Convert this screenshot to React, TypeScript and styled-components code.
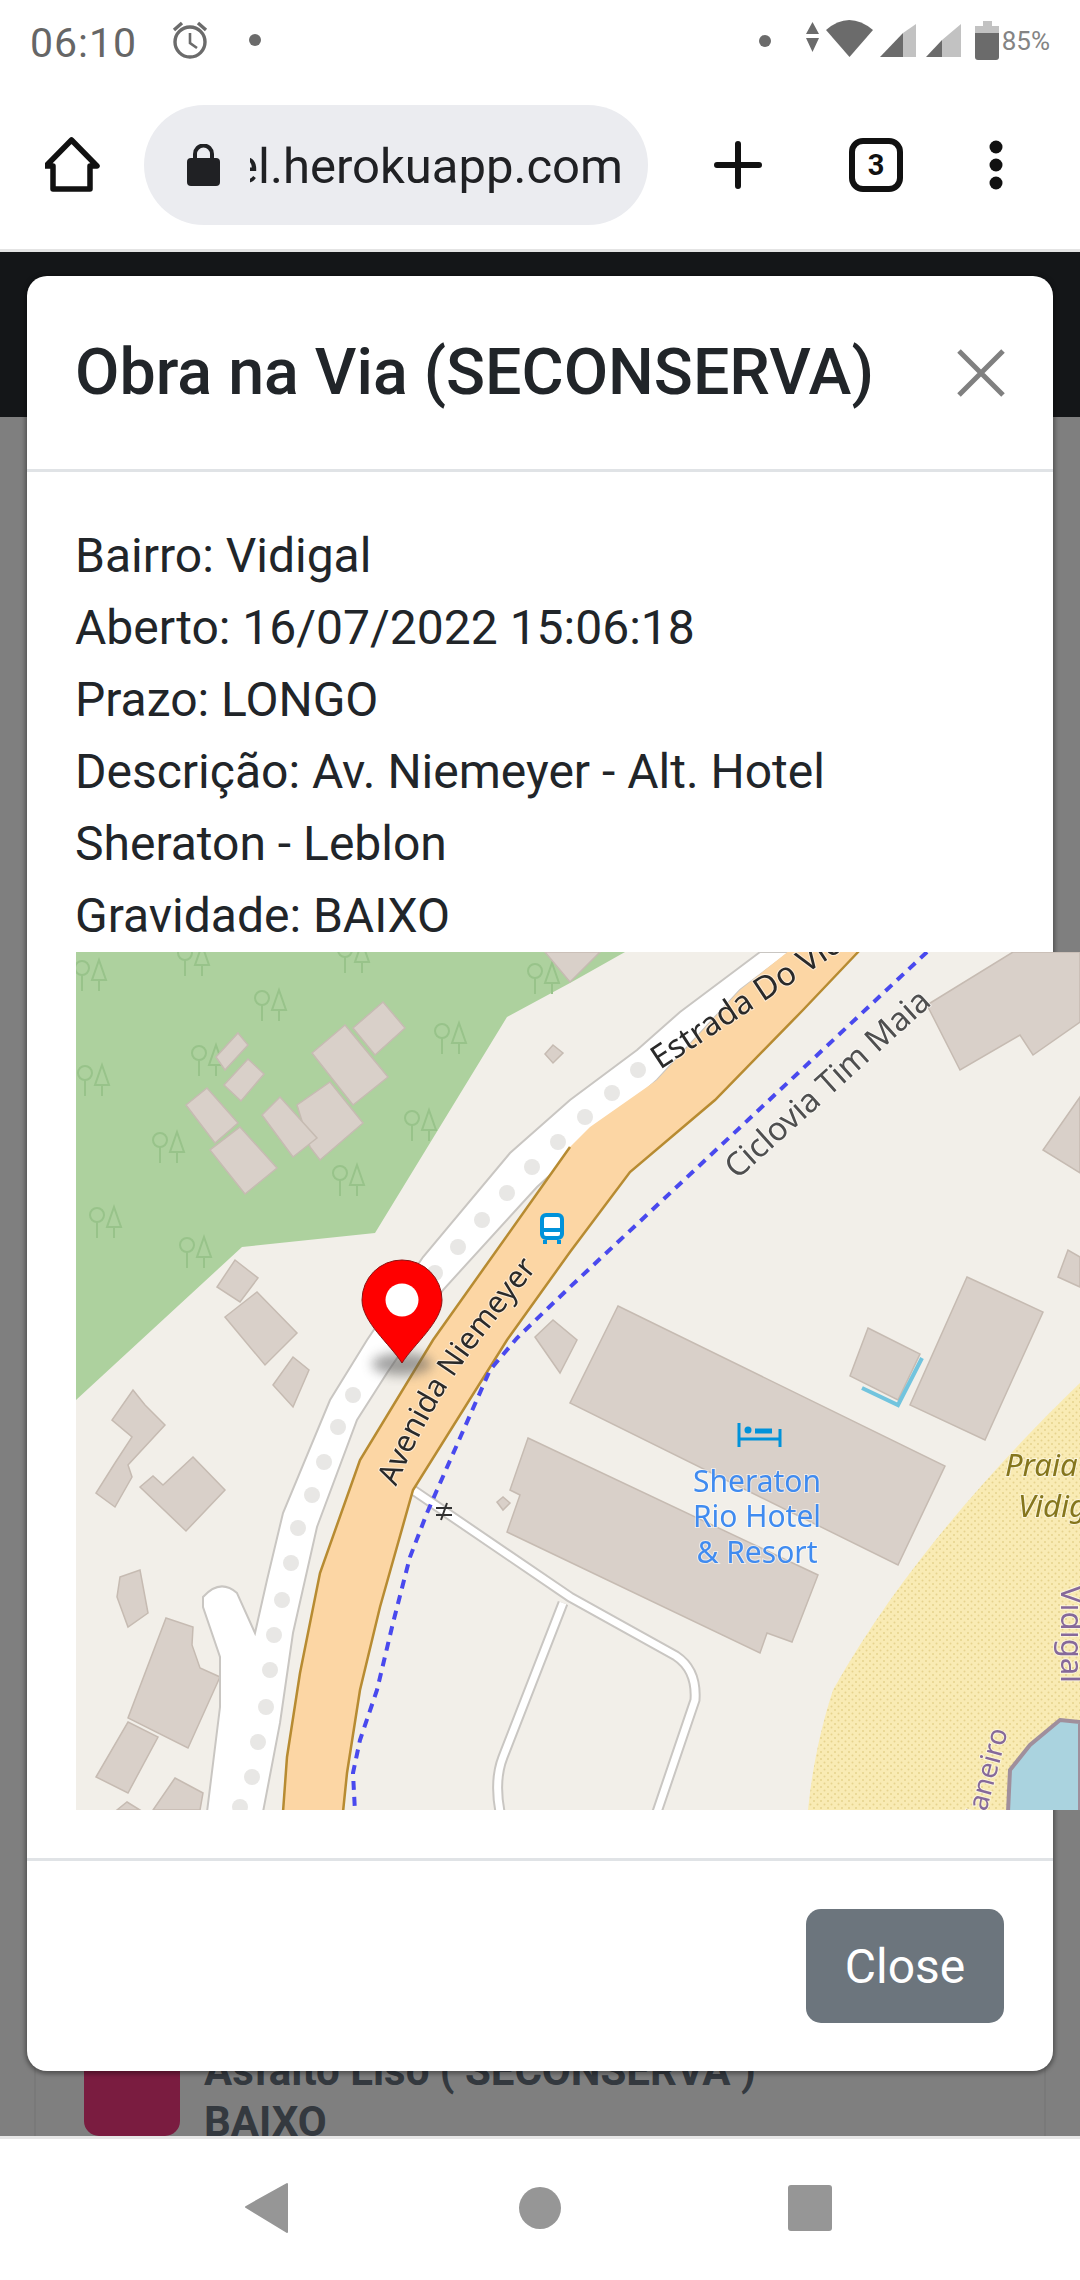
import React from "react";
import styled, { createGlobalStyle } from "styled-components";

const GlobalStyle = createGlobalStyle`
  html, body {
    margin: 0;
    padding: 0;
    background: #fff;
    font-family: Roboto, "Liberation Sans", sans-serif;
  }
`;

const Screen = styled.div`
  width: 1080px;
  height: 2280px;
  display: flex;
  flex-direction: column;
  overflow: hidden;
  background: #fff;
`;

const StatusBar = styled.div`
  height: 96px;
  flex: none;
  display: flex;
  align-items: center;
  justify-content: space-between;
  padding: 0 30px 14px;
  box-sizing: border-box;
  color: #666;
`;

const StatusGroup = styled.div`
  display: flex;
  align-items: center;
`;

const Time = styled.span`
  font-size: 41px;
  letter-spacing: 1px;
  margin: 3px 34px 0 0;
`;

const Percent = styled.span`
  font-size: 26px;
  color: #848484;
  margin-left: 3px;
`;

const Toolbar = styled.div`
  height: 156px;
  flex: none;
  display: flex;
  align-items: center;
  box-sizing: border-box;
  padding: 0 0 16px 45px;
  border-bottom: 3px solid #e4e4e4;
`;

const IconSlot = styled.svg<{ $gap: number }>`
  flex: none;
  margin-left: ${(p) => p.$gap}px;
`;

const AddressPill = styled.div`
  width: 504px;
  height: 120px;
  margin-left: 44px;
  flex: none;
  display: flex;
  align-items: center;
  gap: 30px;
  box-sizing: border-box;
  padding: 0 25px 0 43px;
  border-radius: 60px;
  background: #ebecf0;
`;

const Url = styled.div`
  flex: 1;
  min-width: 0;
  display: flex;
  justify-content: flex-end;
  overflow: hidden;
  white-space: nowrap;
  font-size: 49px;
  margin-top: 3px;
  color: #202124;
`;

const Viewport = styled.div`
  flex: 1;
  min-height: 0;
  position: relative;
  overflow: hidden;
  display: flex;
  flex-direction: column;
  justify-content: space-between;
`;

const SiteNav = styled.div`
  height: 165px;
  background: #282c30;
`;

const ListCard = styled.div`
  display: flex;
  gap: 24px;
  height: 110px;
  margin: 0 34px;
  padding: 0 48px;
  border: solid rgba(0, 0, 0, 0.05);
  border-width: 0 2px;
  align-items: flex-end;
`;

const Swatch = styled.div`
  width: 96px;
  height: 110px;
  flex: none;
  border-radius: 15px;
  background: #f43880;
`;

const ListText = styled.div`
  font-size: 42px;
  font-weight: 700;
  line-height: 51px;
  color: #68737f;
  margin-bottom: -11px;
  white-space: nowrap;
`;

const Backdrop = styled.div`
  position: absolute;
  inset: 0;
  background: rgba(0, 0, 0, 0.5);
  padding: 24px 27px 0;
`;

const Modal = styled.div`
  width: 1026px;
  height: 1795px;
  box-sizing: border-box;
  display: flex;
  flex-direction: column;
  background: #fff;
  border-radius: 20px;
  box-shadow: 0 1px 4px 2px rgba(0, 0, 0, 0.35);
`;

const ModalHeader = styled.div`
  height: 196px;
  flex: none;
  box-sizing: border-box;
  display: flex;
  align-items: flex-start;
  justify-content: space-between;
  padding: 51px 47px 0 48px;
  border-bottom: 3px solid #e0e3e6;
`;

const ModalTitle = styled.h5`
  margin: 0;
  font-size: 64.5px;
  font-weight: 500;
  line-height: 90px;
  color: #212529;
  white-space: nowrap;
`;

const ModalBody = styled.div`
  flex: none;
  padding: 48px 0 48px 49px;
  font-size: 48px;
  line-height: 72px;
  color: #212529;
`;

const BodyText = styled.div`
  width: 860px;
  margin-left: -1px;
`;

const MapSvg = styled.svg`
  display: block;
  width: 1004px;
  height: 858px;
`;

const ModalFooter = styled.div`
  flex: 1;
  display: flex;
  justify-content: flex-end;
  align-items: flex-start;
  padding: 48px 49px 0 0;
  border-top: 3px solid #e0e3e6;
`;

const CloseButton = styled.button`
  width: 198px;
  height: 114px;
  border: 0;
  border-radius: 15px;
  background: #6c757d;
  color: #fff;
  font-family: inherit;
  font-size: 48px;
`;

const NavBar = styled.div`
  height: 144px;
  flex: none;
  box-sizing: border-box;
  border-top: 3px solid #e6e6e6;
`;

const NavIcons = styled.svg`
  display: block;
`;

const buildings = [
  "383,1002 405,1028 375,1055 353,1028",
  "345,1025 388,1077 353,1105 312,1053",
  "330,1082 363,1123 320,1160 310,1147 297,1105",
  "280,1097 317,1138 293,1157 262,1115",
  "207,1088 238,1123 215,1143 186,1105",
  "240,1127 277,1168 245,1194 210,1150",
  "238,1033 248,1045 225,1070 216,1057",
  "248,1059 264,1074 241,1101 224,1085",
  "553,1045 563,1053 553,1063 545,1054",
  "545,952 570,982 600,952",
  "235,1260 258,1278 240,1302 217,1287",
  "257,1292 297,1333 265,1365 225,1317",
  "293,1357 309,1370 293,1407 273,1385",
  "133,1390 145,1405 165,1425 128,1465 132,1477 115,1507 96,1493 115,1463 132,1437 112,1420",
  "193,1457 225,1490 186,1531 140,1487 153,1476 163,1485",
  "120,1577 140,1570 148,1613 128,1627 117,1597",
  "166,1618 193,1627 192,1645 200,1668 220,1677 188,1748 128,1718",
  "128,1722 158,1737 128,1793 96,1777",
  "175,1778 203,1793 200,1810 153,1810",
  "127,1802 140,1810 117,1810",
  "528,1438 818,1575 792,1642 767,1633 760,1653 507,1532 520,1495 510,1490",
  "618,1306 945,1466 898,1565 570,1403",
  "868,1328 920,1354 898,1400 850,1376",
  "967,1277 1043,1312 985,1440 910,1405",
  "927,1005 1013,952 1080,952 1080,1022 1033,1055 1020,1035 960,1070",
  "1080,1097 1043,1150 1080,1173",
  "1068,1250 1058,1277 1080,1287 1080,1257",
  "535,1337 553,1320 577,1340 560,1373",
  "497,1502 503,1497 510,1503 503,1510",
];

const pathDots = [
  [638, 1070], [612, 1093], [585, 1117], [558, 1142], [532, 1167], [507, 1193],
  [482, 1220], [458, 1247], [435, 1273], [353, 1395], [338, 1427], [324, 1462],
  [312, 1495], [298, 1528], [291, 1563], [282, 1600], [274, 1635], [270, 1670],
  [266, 1707], [258, 1742], [252, 1777], [240, 1807],
];

const trees = [
  [75, 975], [178, 960], [338, 957], [255, 1005], [192, 1060], [78, 1080], [435, 1038],
  [405, 1125], [153, 1147], [333, 1180], [90, 1222], [180, 1252], [528, 978],
];

const MapLabel = styled.text<{ $size?: number; $fill: string; $italic?: boolean }>`
  font-family: "Noto Sans", "DejaVu Sans", sans-serif;
  font-size: ${(p) => p.$size ?? 32.5}px;
  fill: ${(p) => p.$fill};
  font-style: ${(p) => (p.$italic ? "italic" : "normal")};
  paint-order: stroke;
  stroke: rgba(255, 255, 255, 0.55);
  stroke-width: 2px;
`;

const Tree = ({ x, y }: { x: number; y: number }) => (
  <g fill="none" stroke="#98c38a" strokeWidth="2">
    <circle cx={x + 7} cy={y - 7} r="7" />
    <path d={`M${x + 7} ${y}V${y + 16}`} />
    <path d={`M${x + 24} ${y - 15}L${x + 31} ${y + 5}H${x + 17}Z`} />
    <path d={`M${x + 24} ${y + 5}V${y + 16}`} />
  </g>
);

const OsmMap = () => (
  <MapSvg viewBox="76 952 1004 858">
    <defs>
      <filter id="soft" x="0" y="0" width="100%" height="100%">
        <feGaussianBlur stdDeviation="0.7" />
      </filter>
      <filter id="shadow" x="-50%" y="-50%" width="200%" height="200%">
        <feGaussianBlur stdDeviation="6" />
      </filter>
      <pattern id="sand" width="7" height="7" patternUnits="userSpaceOnUse">
        <rect width="7" height="7" fill="#f9ebb4" />
        <circle cx="2" cy="2" r="1" fill="#e6d38e" />
        <circle cx="5.5" cy="5.5" r="1" fill="#e6d38e" />
      </pattern>
    </defs>
    <g filter="url(#soft)">
      <rect x="76" y="952" width="1004" height="858" fill="#f2efe9" />
      <polygon points="76,952 625,952 570,983 507,1017 375,1233 242,1247 76,1400" fill="#add19e" />
      {trees.map(([x, y]) => (
        <Tree key={`${x}-${y}`} x={x} y={y} />
      ))}
      <path
        d="M1080 1383C1000 1460 900 1570 833 1690C820 1730 812 1770 808 1810H1080Z"
        fill="url(#sand)"
      />
      <polygon
        points="1060,1720 1080,1722 1080,1812 1008,1812 1010,1770 1030,1745"
        fill="#aad3df"
        stroke="#a08f9c"
        strokeWidth="4"
      />
      {buildings.map((points) => (
        <polygon key={points} points={points} fill="#d9d0c9" stroke="#c6bbb2" strokeWidth="1.5" />
      ))}
      <path d="M862 1388L898 1405L922 1358" fill="none" stroke="#72c4de" strokeWidth="4" />

      <path
        d="M413 1490L570 1597L676 1656Q697 1670 695 1700L657 1812M563 1603L503 1757Q494 1780 500 1812"
        fill="none"
        stroke="#c9c6c2"
        strokeWidth="11"
      />
      <path
        d="M413 1490L570 1597L676 1656Q697 1670 695 1700L657 1812M563 1603L503 1757Q494 1780 500 1812"
        fill="none"
        stroke="#fff"
        strokeWidth="7"
      />

      <path
        d="M760 952L680 1012L637 1050L570 1100L510 1153L423 1257L367 1340L330 1400L283 1513L267 1580L255 1633L237 1593Q220 1578 203 1597V1607L220 1657V1707L207 1812H263L280 1723L293 1633L317 1527L357 1420L387 1373L443 1290L537 1187L570 1157L657 1080L740 990L790 952Z"
        fill="#fff"
        stroke="#c9c6c2"
        strokeWidth="2"
      />
      {pathDots.map(([x, y]) => (
        <circle key={`${x}-${y}`} cx={x} cy={y} r="8" fill="#e8e7e5" />
      ))}

      <path
        d="M790 950L740 990L657 1080L590 1127L570 1147L433 1340L360 1460L320 1573L300 1673L287 1757L283 1812H343L347 1773L360 1690L380 1607L413 1490L507 1340L570 1252L630 1172L715 1100L803 1010L860 950Z"
        fill="#fcd6a4"
      />
      <path
        d="M570 1147L433 1340L360 1460L320 1573L300 1673L287 1757L283 1812M343 1812L347 1773L360 1690L380 1607L413 1490L507 1340L570 1252L630 1172L715 1100L803 1010L860 950"
        fill="none"
        stroke="#b78b30"
        strokeWidth="2.5"
      />

      <path
        d="M927 952L570 1287L517 1338L490 1370L437 1490L427 1513L410 1557L393 1623L377 1690L360 1740L353 1773L355 1812"
        fill="none"
        stroke="#4848ee"
        strokeWidth="4"
        strokeDasharray="9 7"
      />
      <path d="M436 1508H452M436 1515H452M447 1503L441 1520" stroke="#333" strokeWidth="2" />

      <path id="avenida" d="M396 1487Q430 1405 478 1343T560 1240" fill="none" />
      <path id="estrada" d="M660 1070L850 945" fill="none" />
      <path id="ciclovia" d="M737 1180L930 1006" fill="none" />
      <MapLabel $size={30.5} $fill="#2b2b2b">
        <textPath href="#avenida">Avenida Niemeyer</textPath>
      </MapLabel>
      <MapLabel $fill="#2b2b2b">
        <textPath href="#estrada">Estrada Do Vidigal</textPath>
      </MapLabel>
      <MapLabel $fill="#4f4f4f">
        <textPath href="#ciclovia">Ciclovia Tim Maia</textPath>
      </MapLabel>

      <g fill="none" stroke="#0092da">
        <rect x="542" y="1215" width="20" height="23" rx="4" fill="#fff" strokeWidth="4" />
        <path d="M542 1230H562M545 1240V1244M559 1240V1244" strokeWidth="4" />
        <path d="M739 1423V1447M780 1429V1447M739 1439H780" strokeWidth="3" />
        <path d="M755 1431H772" strokeWidth="5" />
      </g>
      <circle cx="748" cy="1430" r="3.5" fill="#0092da" />

      <MapLabel x="757" y="1492" textAnchor="middle" $size={30} $fill="#3f8bf0">Sheraton</MapLabel>
      <MapLabel x="757" y="1527" textAnchor="middle" $size={30} $fill="#3f8bf0">Rio Hotel</MapLabel>
      <MapLabel x="757" y="1563" textAnchor="middle" $size={30} $fill="#3f8bf0">&amp; Resort</MapLabel>
      <MapLabel x="1005" y="1476" $italic $size={31} $fill="#85761f">Praia</MapLabel>
      <MapLabel x="1018" y="1517" $italic $size={31} $fill="#85761f">Vidigal</MapLabel>
      <MapLabel transform="translate(1061 1585) rotate(90)" $size={31} $fill="#86699a">Vidigal</MapLabel>
      <MapLabel transform="translate(1008 1731) rotate(-75)" textAnchor="end" $size={28} $fill="#86699a">Janeiro</MapLabel>

      <ellipse cx="402" cy="1364" rx="30" ry="11" fill="#555" opacity="0.55" filter="url(#shadow)" />
    </g>
    <path
      d="M402 1363C390 1344 362 1322 362 1300A40 40 0 0 1 442 1300C442 1322 414 1344 402 1363Z"
      fill="#f00"
      stroke="#8a1010"
      strokeWidth="1"
    />
    <circle cx="402" cy="1300" r="16.5" fill="#fff" />
  </MapSvg>
);

export default function App() {
  return (
    <Screen>
      <GlobalStyle />
      <StatusBar>
        <StatusGroup>
          <Time>06:10</Time>
          <svg width="92" height="40" viewBox="172 22 92 40">
            <g fill="none" stroke="#6b6b6b" strokeWidth="3.4">
              <circle cx="191" cy="43" r="15" />
              <path d="M191 34V44L198 49" strokeWidth="2.6" />
              <path d="M175 31L183 24M207 31L199 24" strokeWidth="3.4" />
            </g>
            <circle cx="256" cy="41" r="6" fill="#6b6b6b" />
          </svg>
        </StatusGroup>
        <StatusGroup>
          <svg width="240" height="42" viewBox="757 20 240 42">
            <g fill="#6b6b6b">
              <circle cx="763" cy="41" r="6" />
              <path d="M810.500 22L817 34H804ZM810.500 52L804 38H817Z" />
              <path d="M824 30Q847 10 871 30L847.500 57Z" />
              <path d="M878 57L901 33V57Z" />
              <path d="M924 57L940 40V57Z" />
              <path d="M973 33H997V57Q997 60 994 60H976Q973 60 973 57Z" />
            </g>
            <g fill="#c2c2c2">
              <path d="M901 33L914 24V57H901Z" />
              <path d="M940 40L959 24V57H940Z" />
              <path d="M981 21H990V26H997V33H973V26H981Z" />
            </g>
          </svg>
          <Percent>85%</Percent>
        </StatusGroup>
      </StatusBar>

      <Toolbar>
        <IconSlot $gap={0} width="55" height="56" viewBox="45 138 55 56">
          <path
            d="M71.500 141L97 167H90V190H53V167H46Z"
            fill="none"
            stroke="#111"
            strokeWidth="5.500"
            strokeLinejoin="round"
          />
        </IconSlot>
        <AddressPill>
          <svg width="33" height="42" viewBox="187 143 33 42" style={{ flex: "none" }}>
            <path d="M195 158V153A8.500 8.500 0 0 1 212 153V158" fill="none" stroke="#202124" strokeWidth="4" />
            <rect x="187" y="157" width="33" height="28" rx="4" fill="#202124" />
          </svg>
          <Url>el.herokuapp.com</Url>
        </AddressPill>
        <IconSlot $gap={66} width="48" height="48" viewBox="714 141 48 48">
          <path d="M738 144V186M717 165H759" stroke="#111" strokeWidth="6" strokeLinecap="round" />
        </IconSlot>
        <IconSlot $gap={87} width="54" height="54" viewBox="849 138 54 54">
          <rect x="852" y="141" width="48" height="48" rx="11" fill="none" stroke="#111" strokeWidth="6" />
          <text x="876" y="175" textAnchor="middle" fontFamily="Roboto, sans-serif" fontSize="29" fontWeight="700" fill="#111">
            3
          </text>
        </IconSlot>
        <IconSlot $gap={86} width="14" height="50" viewBox="988 140 14 50">
          <circle cx="995" cy="147" r="6.500" fill="#111" />
          <circle cx="995" cy="165" r="6.500" fill="#111" />
          <circle cx="995" cy="183" r="6.500" fill="#111" />
        </IconSlot>
      </Toolbar>

      <Viewport>
        <SiteNav />
        <ListCard>
          <Swatch />
          <ListText>
            Asfalto Liso ( SECONSERVA )
            <br />
            BAIXO
          </ListText>
        </ListCard>
        <Backdrop>
          <Modal>
            <ModalHeader>
              <ModalTitle>Obra na Via (SECONSERVA)</ModalTitle>
              <svg width="50" height="50" viewBox="0 0 50 50" style={{ marginTop: 21 }}>
                <path d="M3 3L47 47M47 3L3 47" stroke="#808080" strokeWidth="5" />
              </svg>
            </ModalHeader>
            <ModalBody>
              <BodyText>
                Bairro: Vidigal
                <br />
                Aberto: 16/07/2022 15:06:18
                <br />
                Prazo: LONGO
                <br />
                Descrição: Av. Niemeyer - Alt. Hotel Sheraton - Leblon
                <br />
                Gravidade: BAIXO
              </BodyText>
              <OsmMap />
            </ModalBody>
            <ModalFooter>
              <CloseButton>Close</CloseButton>
            </ModalFooter>
          </Modal>
        </Backdrop>
      </Viewport>

      <NavBar>
        <NavIcons width="1080" height="141" viewBox="0 2139 1080 141">
          <path d="M287 2184V2232L246 2207Z" fill="#969696" stroke="#969696" strokeWidth="2" strokeLinejoin="round" />
          <circle cx="540" cy="2208" r="21" fill="#969696" />
          <rect x="788" y="2185" width="44" height="46" rx="3" fill="#969696" />
        </NavIcons>
      </NavBar>
    </Screen>
  );
}
